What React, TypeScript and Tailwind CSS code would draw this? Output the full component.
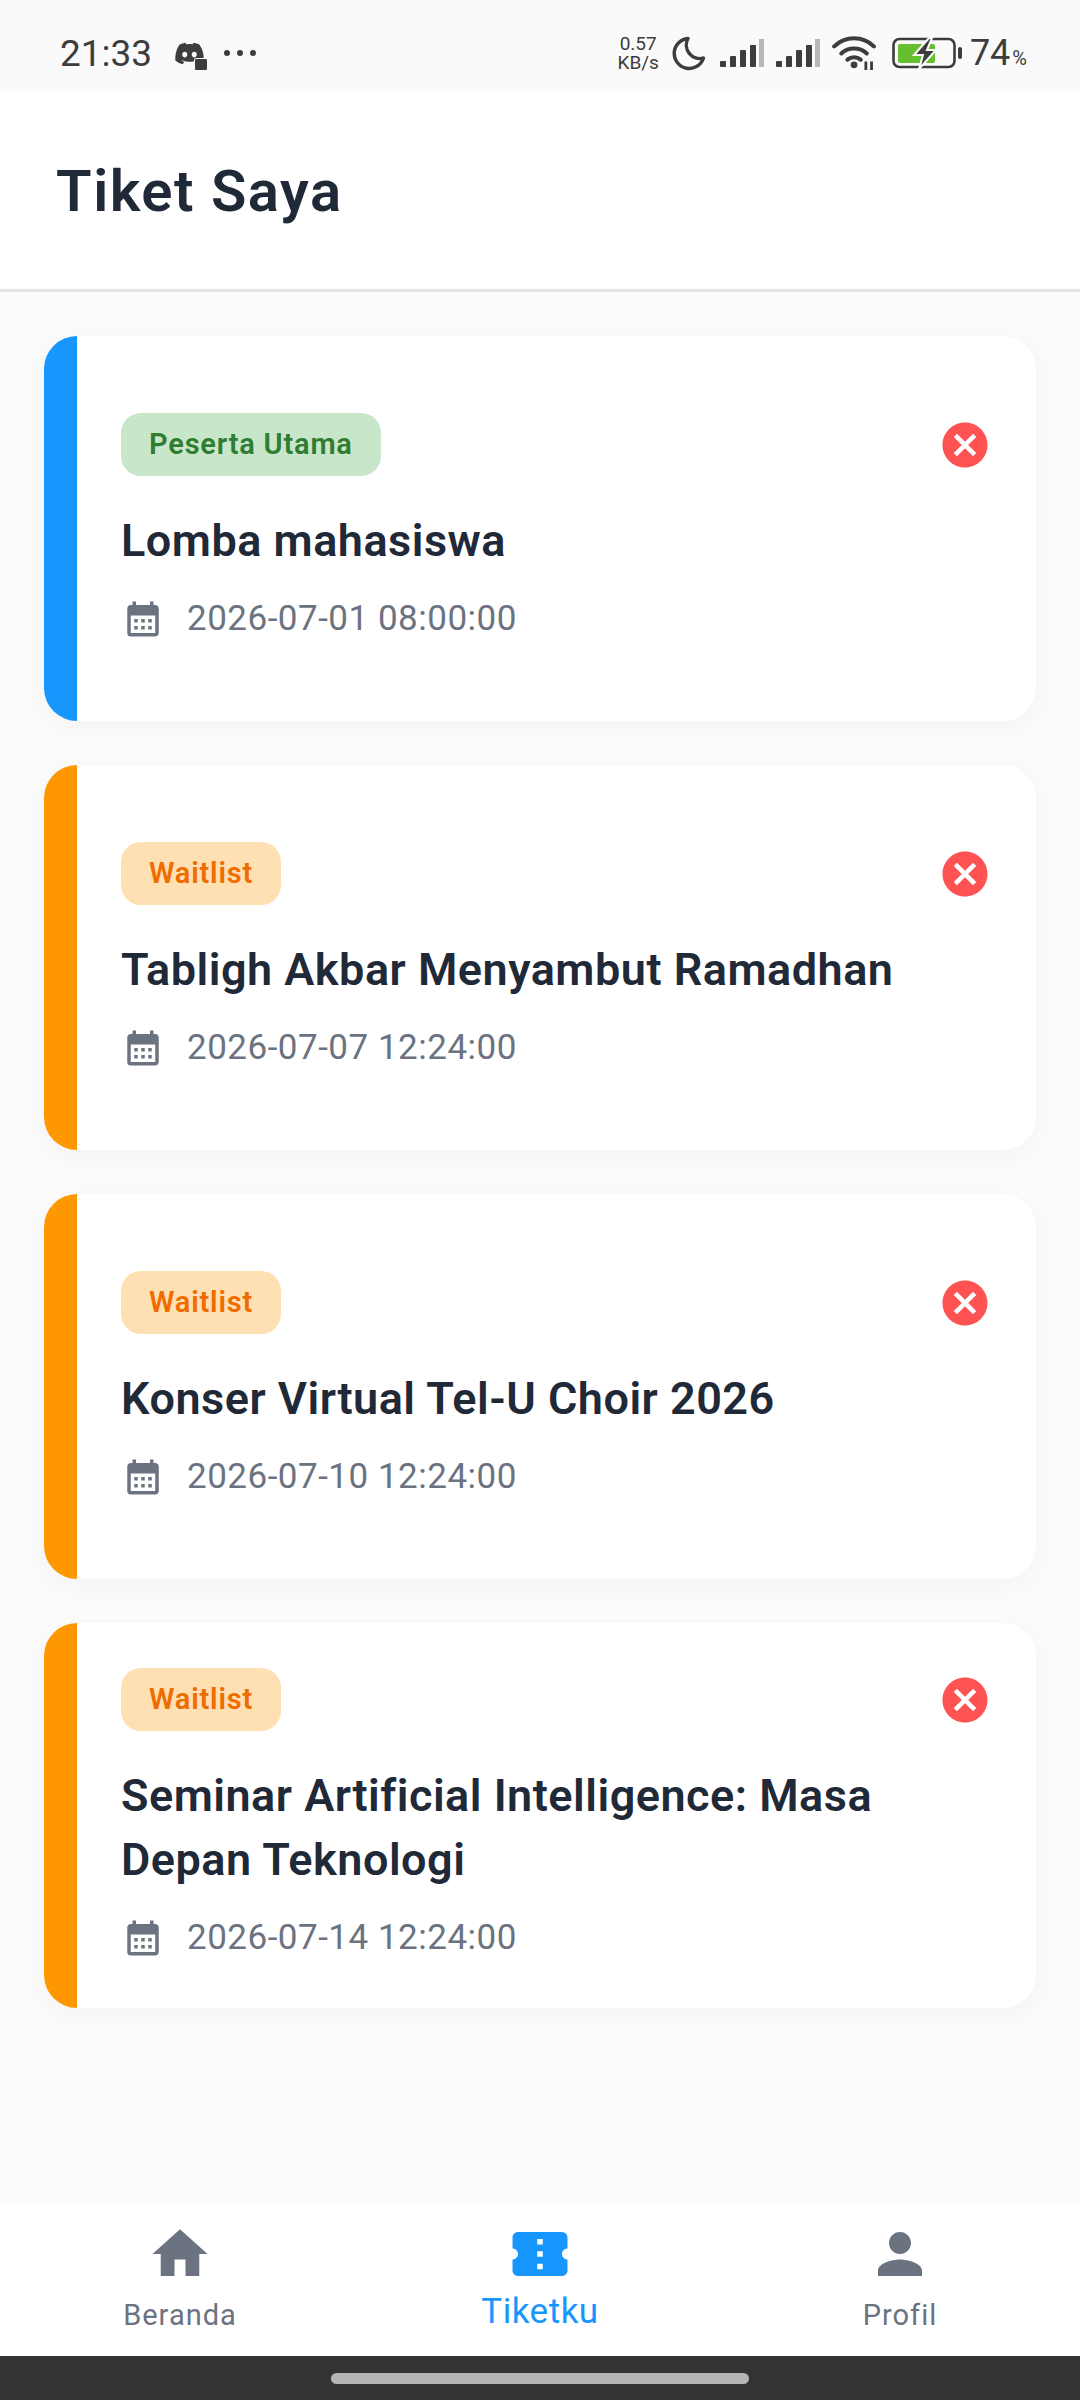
import React from "react";
import { MdCalendarMonth, MdCancel, MdConfirmationNumber, MdHome, MdPerson } from "react-icons/md";
import { FaDiscord } from "react-icons/fa";

interface Ticket {
  title: string;
  date: string;
  role: "main" | "waitlist";
}

const tickets: Ticket[] = [
  { title: "Lomba mahasiswa", date: "2026-07-01 08:00:00", role: "main" },
  { title: "Tabligh Akbar Menyambut Ramadhan", date: "2026-07-07 12:24:00", role: "waitlist" },
  { title: "Konser Virtual Tel-U Choir 2026", date: "2026-07-10 12:24:00", role: "waitlist" },
  { title: "Seminar Artificial Intelligence: Masa Depan Teknologi", date: "2026-07-14 12:24:00", role: "waitlist" },
];

const SignalBars = () => (
  <svg viewBox="0 0 44 28" className="w-[44px] h-[28px]">
    <rect x="0" y="22" width="6" height="6" rx="1" fill="#3d3d3d" />
    <rect x="10" y="17" width="6" height="11" rx="1" fill="#3d3d3d" />
    <rect x="20" y="11" width="6" height="17" rx="1" fill="#3d3d3d" />
    <rect x="30" y="6" width="6" height="22" rx="1" fill="#3d3d3d" />
    <rect x="39" y="0" width="5" height="28" fill="#b8b8b8" />
  </svg>
);

const StatusBar = () => (
  <div className="h-[92px] shrink-0 bg-[#fafafa] flex items-center pt-[14px] pl-[60px] pr-[53px] text-[#3d3d3d]">
    <span className="text-[37px] leading-none">21:33</span>
    <span className="relative ml-[22px] w-[32px] h-[32px] flex items-center">
      <FaDiscord className="w-[31px] h-[31px] text-[#3d3d3d]" />
      <span className="absolute right-[-2px] bottom-[-2px] w-[14px] h-[13px] bg-[#3d3d3d] border border-[#fafafa] rounded-[2px]" />
    </span>
    <span className="ml-[18px] flex gap-[7px]">
      <span className="w-[6px] h-[6px] rounded-full bg-[#3d3d3d]" />
      <span className="w-[6px] h-[6px] rounded-full bg-[#3d3d3d]" />
      <span className="w-[6px] h-[6px] rounded-full bg-[#3d3d3d]" />
    </span>
    <div className="ml-auto flex items-center">
      <div className="flex flex-col items-center text-[19px] leading-[19px] mr-[12px]">
        <span>0.57</span>
        <span>KB/s</span>
      </div>
      <svg viewBox="0 0 36 36" className="w-[36px] h-[36px] mr-[13px]">
        <path d="M17 3.5A15 15 0 1 0 32.5 23 A13.5 13.5 0 0 1 17 3.5z" fill="none" stroke="#3d3d3d" strokeWidth="3.4" strokeLinejoin="round" />
      </svg>
      <SignalBars />
      <span className="w-[12px]" />
      <SignalBars />
      <svg viewBox="0 0 48 36" className="w-[46px] h-[34px] ml-[12px]">
        <path d="M2 11 A30 30 0 0 1 44 11" fill="none" stroke="#3d3d3d" strokeWidth="4.4" strokeLinecap="round" />
        <path d="M9.5 18.5 A20 20 0 0 1 36.5 18.5" fill="none" stroke="#3d3d3d" strokeWidth="4.4" strokeLinecap="round" />
        <path d="M16 25 A11 11 0 0 1 30 25" fill="none" stroke="#3d3d3d" strokeWidth="4.4" strokeLinecap="round" />
        <circle cx="23" cy="30.5" r="3.6" fill="#3d3d3d" />
        <rect x="34" y="27" width="3" height="9" fill="#3d3d3d" />
        <rect x="40" y="27" width="3" height="9" fill="#3d3d3d" />
      </svg>
      <svg viewBox="0 0 70 32" className="w-[70px] h-[32px] ml-[14px]">
        <rect x="1.5" y="2" width="61" height="28" rx="6" fill="none" stroke="#3d3d3d" strokeWidth="2.6" />
        <rect x="6" y="7" width="37" height="19" rx="2" fill="#65bf2f" />
        <rect x="66" y="10" width="4" height="12" rx="2" fill="#3d3d3d" />
        <path d="M37 1 L22 18 H31 L27 32 L44 13 H35 L40 1 Z" fill="#3d3d3d" stroke="#fafafa" strokeWidth="2" />
      </svg>
      <span className="text-[36px] leading-none ml-[8px]">74</span>
      <span className="text-[20px] leading-none self-end mb-[4px] ml-[2px]">%</span>
    </div>
  </div>
);

const TicketCard = ({ ticket }: { ticket: Ticket }) => {
  const isMain = ticket.role === "main";

  return (
    <div className="h-[385px] rounded-[33px] bg-white flex overflow-hidden shadow-[0_6px_24px_rgba(0,0,0,0.035)]">
      <div className={`w-[33px] shrink-0 ${isMain ? "bg-[#1796fe]" : "bg-[#ff9800]"}`} />
      <div className="flex-1 flex items-start justify-between pt-[3px] pl-[44px] pr-[44px] self-center">
        <div className="flex-1 flex flex-col items-start">
          <span
            className={`h-[63px] px-[28px] rounded-[20px] flex items-center text-[29px] font-semibold tracking-[0.8px] ${
              isMain ? "bg-[#c8e6c9] text-[#2e7d32]" : "bg-[#ffe0b2] text-[#ef6c00]"
            }`}
          >
            {isMain ? "Peserta Utama" : "Waitlist"}
          </span>
          <h2 className="mt-[33px] text-[45px] leading-[64px] font-semibold tracking-[0.5px] text-[#1f2937]">{ticket.title}</h2>
          <div className="mt-[18px] flex items-center h-[56px] text-[#6b7280]">
            <MdCalendarMonth className="w-[42px] h-[42px] ml-[1px]" />
            <span className="ml-[23px] text-[35px] tracking-[0.5px]">{ticket.date}</span>
          </div>
        </div>
        <MdCancel className="w-[54px] h-[54px] text-[#ff5252] shrink-0 mt-[5px]" />
      </div>
    </div>
  );
};

const NavItem = ({ icon, label, active }: { icon: React.ReactNode; label: string; active?: boolean }) => (
  <div className={`flex-1 flex flex-col items-center ${active ? "text-[#1796fe]" : "text-[#6b7280]"}`}>
    {icon}
    <span className={active ? "text-[35px] leading-[40px] mt-[5px] tracking-[0.5px]" : "text-[29px] leading-[40px] mt-[8px] tracking-[1px]"}>{label}</span>
  </div>
);

export default function App() {
  return (
    <div className="w-[1080px] h-[2400px] flex flex-col bg-[#fbfbfb] font-['Roboto',sans-serif] overflow-hidden">
      <StatusBar />

      <header className="h-[200px] shrink-0 bg-white border-b-[3px] border-[#e4e4e4] flex items-center pl-[56px] pt-[2px]">
        <h1 className="text-[58px] font-semibold tracking-[1.5px] text-[#1f2937]">Tiket Saya</h1>
      </header>

      <main className="flex-1 px-[44px] pt-[44px] flex flex-col gap-[44px]">
        {tickets.map((ticket) => (
          <TicketCard key={ticket.title} ticket={ticket} />
        ))}
      </main>

      <nav className="h-[154px] shrink-0 bg-white flex items-start pt-[19px]">
        <NavItem icon={<MdHome className="w-[66px] h-[66px]" />} label="Beranda" />
        <NavItem active icon={<MdConfirmationNumber className="w-[66px] h-[66px]" />} label="Tiketku" />
        <NavItem icon={<MdPerson className="w-[66px] h-[66px]" />} label="Profil" />
      </nav>

      <div className="h-[44px] shrink-0 bg-[#333333] flex justify-center pt-[17px]">
        <div className="w-[418px] h-[11px] rounded-full bg-[#b5b5b5]" />
      </div>
    </div>
  );
}
